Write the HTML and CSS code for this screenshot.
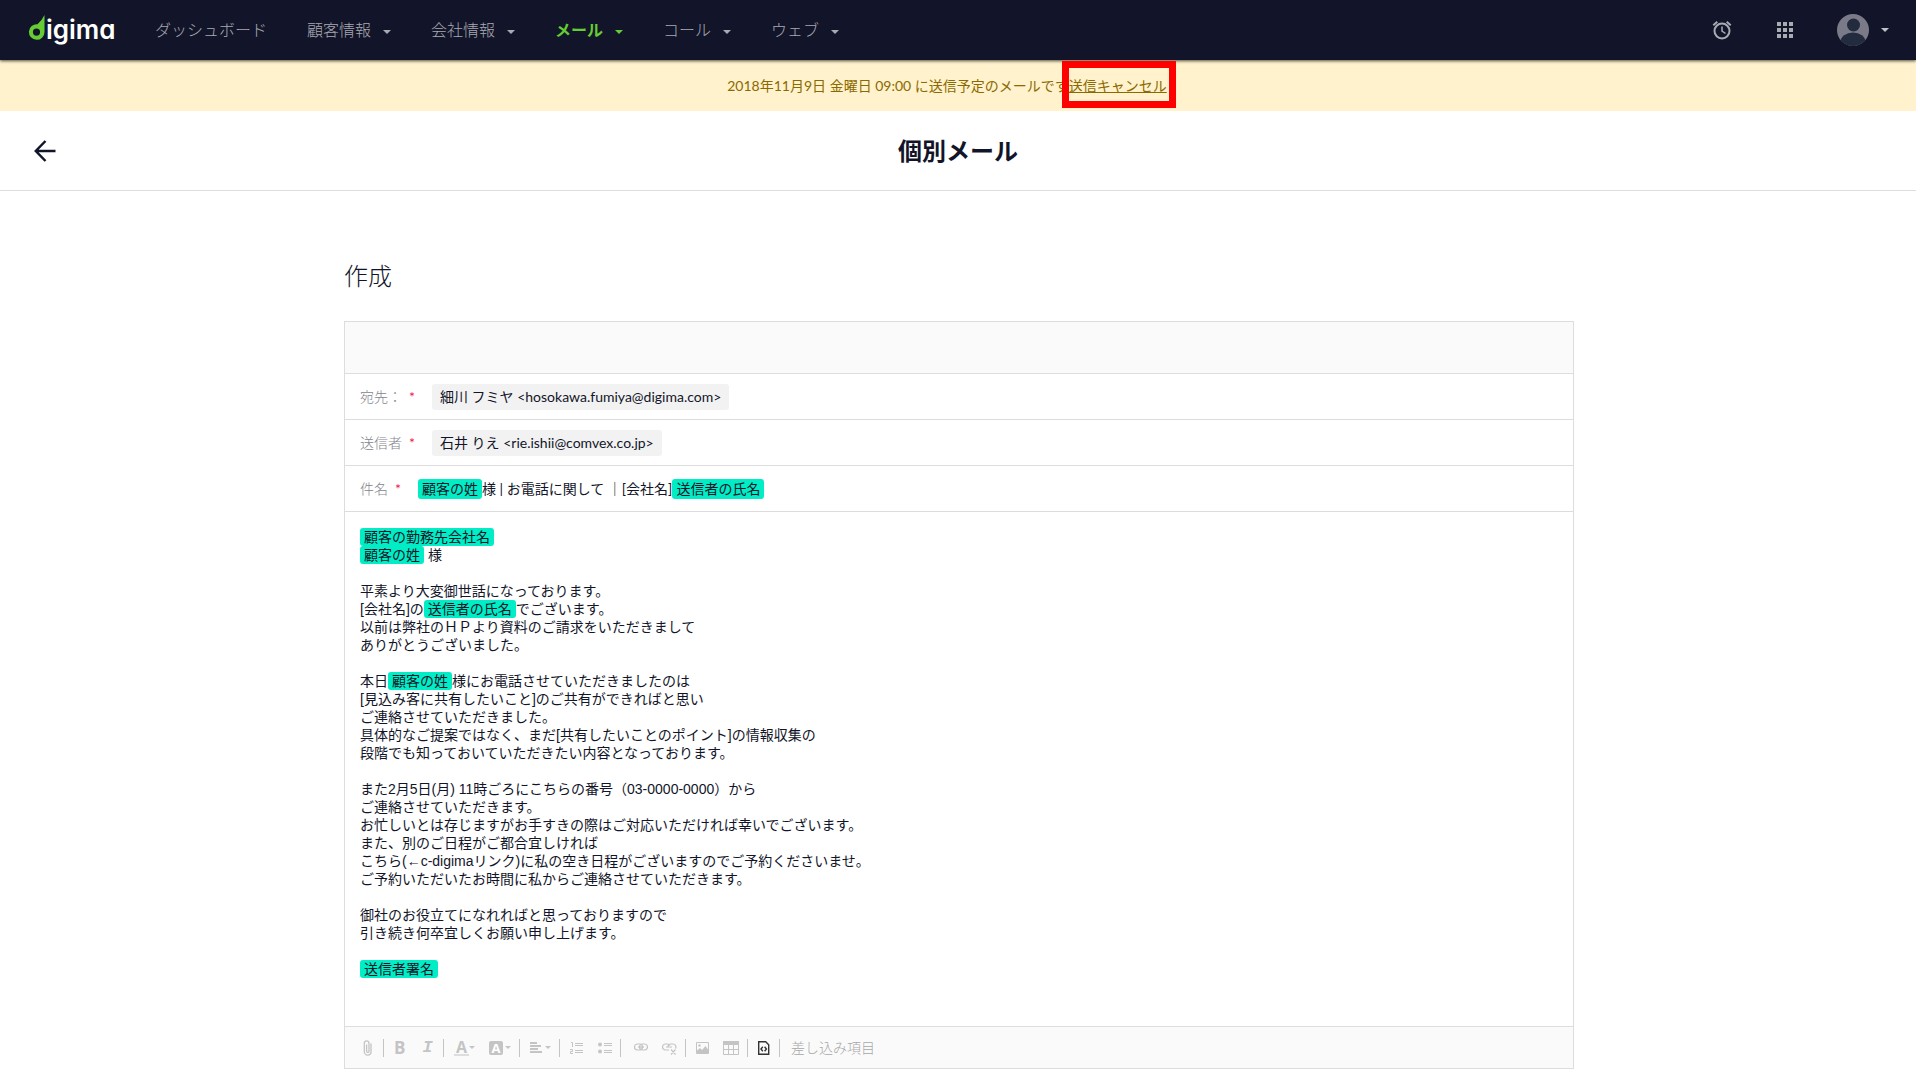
FILE: index.html
```html
<!DOCTYPE html>
<html lang="ja">
<head>
<meta charset="utf-8">
<meta name="viewport" content="width=device-width, initial-scale=1">
<title>個別メール | digima</title>
<link rel="stylesheet" href="styles.css">
</head>
<body>
<header class="topbar">
  <a class="logo" href="#" aria-label="digima">
    <svg class="logo-mark" width="18" height="26" viewBox="0 0 18 26" aria-hidden="true"><path fill="#6c3" fill-rule="evenodd" d="M16.500 0v17A7.800 7.800 0 1 1 9.500 9.300Q13.500 6 16.500 0zM8.500 13.500a3.600 3.600 0 1 0 0 7.200a3.600 3.600 0 0 0 0-7.200z"/></svg><span class="logo-text">igima</span>
  </a>
  <nav class="nav">
    <a class="nav-item" href="#">ダッシュボード</a>
    <button class="nav-item" type="button">顧客情報<span class="caret"></span></button>
    <button class="nav-item" type="button">会社情報<span class="caret"></span></button>
    <button class="nav-item active" type="button">メール<span class="caret"></span></button>
    <button class="nav-item" type="button">コール<span class="caret"></span></button>
    <button class="nav-item" type="button">ウェブ<span class="caret"></span></button>
  </nav>
  <div class="tools">
    <button class="tool" type="button" aria-label="アラーム">
      <svg width="20" height="20" viewBox="0 0 20 20" fill="none" stroke="#a9abb3" stroke-width="2"><circle cx="10" cy="11" r="7.500"/><path d="M10 6.500V11l3.500 2.500" stroke-width="1.500"/><path d="M1.300 5.200L5.300 1.800M18.700 5.200l-4-3.400"/></svg>
    </button>
    <button class="tool" type="button" aria-label="アプリ">
      <svg width="16" height="16" viewBox="0 0 16 16" fill="#a9abb3"><path d="M0 0h4v4H0zM6 0h4v4H6zM12 0h4v4h-4zM0 6h4v4H0zM6 6h4v4H6zM12 6h4v4h-4zM0 12h4v4H0zM6 12h4v4H6zM12 12h4v4h-4z"/></svg>
    </button>
    <button class="tool account" type="button" aria-label="アカウント">
      <svg width="32" height="32" viewBox="0 0 32 32"><defs><clipPath id="round"><circle cx="16" cy="16" r="16"/></clipPath></defs><g clip-path="url(#round)"><path fill="#7b7a88" d="M0 0h32v32H0z"/><circle cx="16.500" cy="11" r="6.500" fill="#232b3e"/><ellipse cx="16" cy="28" rx="12.500" ry="9.500" fill="#232b3e"/></g></svg>
      <span class="caret"></span>
    </button>
  </div>
</header>

<div class="notice">
  <p class="notice-text">2018年11月9日 金曜日 09:00 に送信予定のメールです<a class="cancel" href="#">送信キャンセル</a></p>
</div>

<div class="titlebar">
  <a class="back" href="#" aria-label="戻る"><svg width="22" height="22" viewBox="0 0 22 22" fill="none" stroke="#121529" stroke-width="2.500"><path d="M21.500 11H2M11.500 1L1.800 11l9.700 10"/></svg></a>
  <h1 class="title">個別メール</h1>
</div>

<main class="content">
  <h2 class="heading">作成</h2>
  <section class="card">
    <div class="card-head"></div>
    <div class="row"><span class="label">宛先：</span><span class="req">*</span><span class="address">細川 フミヤ &lt;hosokawa.fumiya@digima.com&gt;</span></div>
    <div class="row"><span class="label">送信者</span><span class="req">*</span><span class="address">石井 りえ &lt;rie.ishii@comvex.co.jp&gt;</span></div>
    <div class="row"><span class="label" id="subject-label">件名</span><span class="req">*</span><div class="subject" role="textbox" aria-labelledby="subject-label" contenteditable="true"><span class="token">顧客の姓</span>様 | お電話に関して ｜[会社名]<span class="token">送信者の氏名</span></div></div>
    <div class="message" role="textbox" aria-multiline="true" aria-label="本文" contenteditable="true">
      <p><span class="token">顧客の勤務先会社名</span><br><span class="token">顧客の姓</span> 様</p>
      <p>平素より大変御世話になっております。<br>[会社名]の<span class="token">送信者の氏名</span>でございます。<br>以前は弊社のＨＰより資料のご請求をいただきまして<br>ありがとうございました。</p>
      <p>本日<span class="token">顧客の姓</span>様にお電話させていただきましたのは<br>[見込み客に共有したいこと]のご共有ができればと思い<br>ご連絡させていただきました。<br>具体的なご提案ではなく、まだ[共有したいことのポイント]の情報収集の<br>段階でも知っておいていただきたい内容となっております。</p>
      <p>また2月5日(月) 11時ごろにこちらの番号（03-0000-0000）から<br>ご連絡させていただきます。<br>お忙しいとは存じますがお手すきの際はご対応いただければ幸いでございます。<br>また、別のご日程がご都合宜しければ<br>こちら(←c-digimaリンク)に私の空き日程がございますのでご予約くださいませ。<br>ご予約いただいたお時間に私からご連絡させていただきます。</p>
      <p>御社のお役立てになれればと思っておりますので<br>引き続き何卒宜しくお願い申し上げます。</p>
      <p><span class="token">送信者署名</span></p>
    </div>
    <div class="toolbar" role="toolbar" aria-label="書式">
      <div class="group">
        <button class="tb" type="button" aria-label="添付"><svg width="13" height="16" viewBox="0 0 13 16" fill="none" stroke="#c4c4c4" stroke-width="1.300"><path d="M9 3.500v8.200a3.300 3.300 0 0 1-6.700 0V3.200a2.300 2.300 0 0 1 4.700 0v8a1.200 1.200 0 0 1-2.400 0V4.500"/></svg></button>
      </div>
      <div class="group">
        <button class="tb bold" type="button" aria-label="太字">B</button>
        <button class="tb italic" type="button" aria-label="斜体">I</button>
      </div>
      <div class="group">
        <button class="tb" type="button" aria-label="文字色"><span class="ink">A</span><span class="mini"></span></button>
        <button class="tb" type="button" aria-label="背景色"><span class="fill">A</span><span class="mini"></span></button>
      </div>
      <div class="group">
        <button class="tb" type="button" aria-label="配置"><svg width="12" height="12" viewBox="0 0 12 12" fill="#c4c4c4"><path d="M0 0h7v2H0zM0 3h11v2H0zM0 6h8v2H0zM0 9h12v2H0z"/></svg><span class="mini wide"></span></button>
      </div>
      <div class="group">
        <button class="tb" type="button" aria-label="番号付きリスト"><svg width="14" height="14" viewBox="0 0 14 14" fill="none" stroke="#c4c4c4"><path d="M5 2.500h8M5 4.500h8M5 9.500h8M5 11.500h8M1 1.500h1.500V6M0 8.500h2.500v2H.5v2H3"/></svg></button>
        <button class="tb" type="button" aria-label="箇条書き"><svg width="14" height="14" viewBox="0 0 14 14" fill="#c4c4c4"><circle cx="2" cy="3.500" r="2"/><circle cx="2" cy="10.500" r="2"/><path d="M6 2h8v1H6zM6 4h8v1H6zM6 9h8v1H6zM6 11h8v1H6z"/></svg></button>
      </div>
      <div class="group">
        <button class="tb" type="button" aria-label="リンク"><svg width="17" height="14" viewBox="1 0 17 14" fill="none" stroke="#c4c4c4" stroke-width="1.200"><rect x="4.500" y="3" width="8" height="6" rx="3"/><rect x="9.500" y="3" width="8" height="6" rx="3"/><path d="M8 6h6"/></svg></button>
        <button class="tb" type="button" aria-label="リンク解除"><svg width="15" height="14" viewBox="0 0 15 14" fill="none" stroke="#c4c4c4" stroke-width="1.200"><path d="M7 9H3.500a3 3 0 0 1 0-6h2a3 3 0 0 1 2.500 1.500M6 6.500A3 3 0 0 1 8.500 3h2.500a3 3 0 0 1 2.500 4.500M4 6h6M9 8.500l4.500 5M13.500 8.500l-4.500 5"/></svg></button>
      </div>
      <div class="group">
        <button class="tb" type="button" aria-label="画像"><svg width="13" height="12" viewBox="0 0 13 12"><path fill="none" stroke="#c4c4c4" d="M.5.5h12v11H.5z"/><path fill="#c4c4c4" d="M1 11V8.500l3-2.500 2 2 3.500-4L12 7.500V11z"/><circle cx="3.500" cy="3.500" r="1.200" fill="#c4c4c4"/></svg></button>
        <button class="tb" type="button" aria-label="表"><svg width="16" height="14" viewBox="0 0 16 14"><path fill="#c4c4c4" d="M0 0h16v4H0z"/><path fill="none" stroke="#c4c4c4" d="M.5.5h15v13H.5zM.5 8.500h15M5.500 4v9.500M10.500 4v9.500"/></svg></button>
      </div>
      <div class="group">
        <button class="tb" type="button" aria-label="ソース"><svg width="13" height="14" viewBox="0 0 13 14" fill="none" stroke="#333" stroke-width="1.400"><path d="M.7.700h7l3 3v9.600h-10z"/><path d="M4.800 5.800L3 8l1.800 2.200M6.600 5.800L8.400 8l-1.800 2.200"/></svg></button>
      </div>
      <button class="tb merge" type="button">差し込み項目</button>
    </div>
  </section>
</main>
</body>
</html>
```
FILE: styles.css
```css
* { box-sizing: border-box; }

body {
  margin: 0;
  background: #fff;
  color: #121529;
  font: 14px/20px Lato, "Noto Sans CJK JP", sans-serif;
}

button {
  margin: 0;
  padding: 0;
  border: 0;
  background: none;
  color: inherit;
  font: inherit;
  cursor: pointer;
}

p, h1, h2 { margin: 0; }
svg { display: block; }

/* Top navigation */
.topbar {
  position: relative;
  display: flex;
  align-items: center;
  height: 60px;
  padding: 0 27px 0 28px;
  background: #121529;
  box-shadow: 0 1px 3px rgba(0, 0, 0, .7);
}

.logo {
  display: flex;
  width: 127px;
  color: #fff;
  text-decoration: none;
}

.logo-text {
  font: 600 26px/30px Inter, sans-serif;
  font-feature-settings: "cv11";
}

.nav {
  display: flex;
  gap: 40px;
}

.nav-item {
  display: flex;
  align-items: center;
  gap: 12px;
  color: #a8a9b2;
  font-size: 16px;
  font-weight: 300;
  line-height: 24px;
  text-decoration: none;
}

.nav-item.active {
  color: #6c3;
  font-weight: 700;
}

.caret {
  width: 8px;
  margin-top: 4px;
  border: 4px solid transparent;
  border-top-color: currentColor;
  border-bottom: 0;
}

.tools {
  display: flex;
  align-items: center;
  gap: 44px;
  margin-left: auto;
  color: #c0c1c8;
}

.tool:first-child { margin-right: 1px; }

.account {
  display: flex;
  align-items: center;
  gap: 12px;
}

.account .caret { margin-top: 0; }

/* Scheduled-send notice */
.notice {
  padding: 16px 22px 15px 0;
  background: #fff2cc;
  color: #8a6a00;
  text-align: center;
}

.cancel {
  position: relative;
  color: inherit;
}

.cancel::after {
  content: "";
  position: absolute;
  inset: -16px -9px -14px -7px;
  border: 7px solid #f00;
}

/* Page title */
.titlebar {
  display: grid;
  grid-template-columns: 1fr auto 1fr;
  align-items: center;
  height: 80px;
  padding: 0 34px;
  border-bottom: 1px solid #ddd;
}

.back { justify-self: start; }

.title {
  font-size: 24px;
  line-height: 36px;
}

/* Composer */
.content {
  max-width: 1232px;
  margin: 0 auto;
  padding: 67px 0 9px 2px;
}

.heading {
  margin-bottom: 27px;
  font-size: 24px;
  font-weight: 300;
  line-height: 36px;
}

.card { border: 1px solid #ddd; }

.card-head {
  height: 51px;
  background: #fafafa;
}

.row {
  display: flex;
  align-items: center;
  min-height: 46px;
  padding: 0 15px;
  border-top: 1px solid #ddd;
}

.label { color: #83848e; font-weight: 300; }

.req {
  width: 5px;
  margin: 0 18px 0 7px;
  color: #f0134d;
}

.address {
  padding: 3px 8px;
  border-radius: 3px;
  background: #f2f2f2;
}

.subject, .message { outline: 0; }

.token {
  display: inline-block;
  padding: 0 4px;
  border-radius: 3px;
  background: #00edc5;
}

.message {
  display: flex;
  flex-direction: column;
  gap: 18px;
  min-height: 515px;
  padding: 16px 15px;
  border-top: 1px solid #ddd;
  font: 14px/18px "Liberation Sans", "Noto Sans CJK JP", sans-serif;
}

.message .token { vertical-align: top; }

.toolbar {
  display: flex;
  align-items: center;
  height: 42px;
  padding-left: 7px;
  border-top: 1px solid #ddd;
  background: #fafafa;
  color: #c4c4c4;
}

.group {
  display: flex;
  align-items: center;
  gap: 14px;
  height: 18px;
  padding: 0 8px 0 10px;
  border-right: 1px solid #c4c4c4;
}

.tb {
  display: flex;
  align-items: center;
  line-height: 18px;
}

.bold {
  width: 12px;
  font: 700 17px/18px "Open Sans", sans-serif;
}

.italic {
  justify-content: center;
  width: 15px;
  font: italic 700 17px/18px "Liberation Mono", monospace;
}

.ink {
  width: 15px;
  border-bottom: 2px solid #ddd;
  font: 700 16px/14px "Open Sans", sans-serif;
}

.fill {
  width: 14px;
  border-radius: 2px;
  background: #c4c4c4;
  color: #fff;
  font: 700 13px/14px "Open Sans", sans-serif;
  text-align: center;
}

.mini {
  margin-left: 2px;
  border: 3px solid transparent;
  border-top-color: currentColor;
  border-bottom: 0;
}

.ink + .mini { margin-left: 0; }
.mini.wide { margin-left: 3px; }

.merge {
  padding-left: 11px;
  color: #a8a8a8;
  font-weight: 300;
}
```
